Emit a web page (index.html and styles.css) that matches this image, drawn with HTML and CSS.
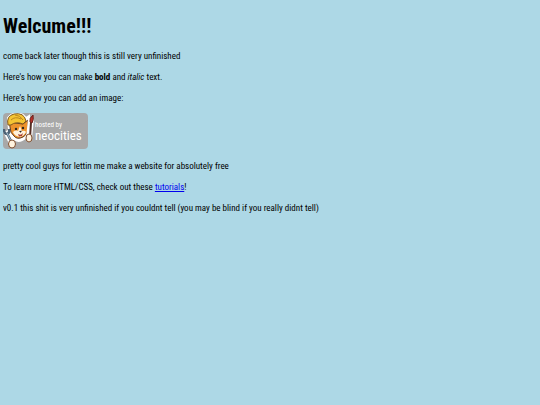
FILE: index.html
```html
<!DOCTYPE html>
<html lang="en">
<head>
<meta charset="utf-8">
<meta name="viewport" content="width=device-width, initial-scale=1">
<title>Welcume!!!</title>
<link rel="stylesheet" href="styles.css">
</head>
<body>
<h1>Welcume!!!</h1>
<p>come back later though this is still very unfinished</p>
<p>Here's how you can make <strong>bold</strong> and <em>italic</em> text.</p>
<p>Here's how you can add an image:</p>
<div class="badge">
  <svg class="mascot" viewBox="0 0 32 36" aria-hidden="true">
    <path d="M6 16 5 5l3-3q6-3 12 0l3 3 3-2v10q0 8-3 11-6 6-11 3-5-3-6-11z" fill="#fff" stroke="#fff" stroke-width="2"/>
    <path d="M7 14 6 7l6 3 8 1 5-4v8q0 6-5 9-6 3-9-1-4-3-4-9z" fill="#ed932c" stroke="#633c20" stroke-width="1"/>
    <path d="M10 19q3-3 5-1l2-5 2 5q3-1 4 1-2 4-6 5-6-1-7-5z" fill="#fff2dc"/>
    <path d="M5 12Q3 3 11 1q10-2 12 7l-3 3q-7-3-12 1z" fill="#f4c534" stroke="#80581d" stroke-width="1"/>
    <path d="M8 7q4-4 10-1M12 2q5 0 8 5" fill="none" stroke="#bd861f"/>
    <circle cx="13" cy="16" r="1.2" fill="#30251f"/>
    <circle cx="20" cy="15" r="1.2" fill="#30251f"/>
    <path d="m16 18 3-.3-1.4 2z" fill="#30251f"/>
    <path d="M15 21q3 2 5-1l-1 3-3 .5z" fill="#a83a2a"/>
    <path d="m3 18 6 12" stroke="#fff" stroke-width="6"/>
    <path d="M1 16q0 5 3 5 3-1 2-5M4 20l5 10" fill="none" stroke="#4c6275" stroke-width="2.4"/>
    <path d="m4 20 5 10" stroke="#a6c1d0" stroke-width="1"/>
    <path d="M28 6 26 25" stroke="#fff" stroke-width="6"/>
    <path d="m28 9-1 16" stroke="#542d23" stroke-width="2"/>
    <path d="M27 9q-1-4 3-7 1 5-1 8z" fill="#bd3029" stroke="#682721"/>
    <ellipse cx="9" cy="31" rx="3.5" ry="4" fill="#fff3df" stroke="#805031"/>
    <ellipse cx="26" cy="25" rx="3" ry="4" fill="#fff3df" stroke="#805031"/>
  </svg>
  <span class="words"><span class="hosted">hosted by</span><span class="brand">neocities</span></span>
</div>
<p>pretty cool guys for lettin me make a website for absolutely free</p>
<p>To learn more HTML/CSS, check out these <a href="#tutorials">tutorials</a>!</p>
<p>v0.1 this shit is very unfinished if you couldnt tell (you may be blind if you really didnt tell)</p>
</body>
</html>
```
FILE: styles.css
```css
body {
  margin: 14px 3px;
  background: #add8e6;
  color: #000;
  font: 9px/12px "Roboto Condensed", "DejaVu Sans Condensed", sans-serif;
}

h1 {
  margin: 0 0 12px;
  font-size: 20px;
  line-height: 24px;
}

p {
  margin: 0 0 9px;
}

a {
  color: #00e;
}

.badge {
  display: flex;
  width: fit-content;
  margin-bottom: 11px;
  padding-right: 6px;
  border-radius: 4px;
  background: #a8a8a8;
  color: #fff;
}

.mascot {
  width: 32px;
  height: 36px;
}

.words {
  display: flex;
  flex-direction: column;
  padding-top: 8px;
}

.hosted {
  font-size: 7px;
  line-height: 8px;
}

.brand {
  font-size: 13px;
  line-height: 14px;
}
```
